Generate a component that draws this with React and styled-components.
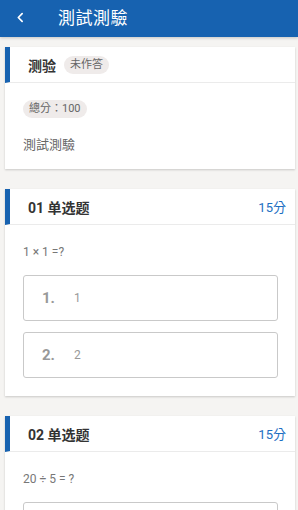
import React from "react";
import styled, { createGlobalStyle } from "styled-components";

const GlobalStyle = createGlobalStyle`
  body {
    margin: 0;
    background: #f5f4f2;
    font-family: Roboto, "Noto Sans CJK TC", "Noto Sans CJK SC", sans-serif;
  }
`;

const questions = [
  { no: "01", type: "单选题", score: 15, stem: "1 × 1 =?", options: ["1", "2"] },
  { no: "02", type: "单选题", score: 15, stem: "20 ÷ 5 = ?", options: ["4", "5"] },
];

function App() {
  return (
    <Page>
      <GlobalStyle />
      <TopBar>
        <BackButton>
          <svg width="13" height="13" viewBox="0 0 24 24" fill="none" stroke="#fff" strokeWidth="3.2" strokeLinecap="round" strokeLinejoin="round">
            <path d="M15 5 8 12l7 7" />
          </svg>
        </BackButton>
        <TopTitle>測試測驗</TopTitle>
      </TopBar>

      <List>
        <Card>
          <CardHead>
            <HeadTitle>测验</HeadTitle>
            <Tag>未作答</Tag>
          </CardHead>
          <CardBody $bottom={16}>
            <Tag $wide>總分：100</Tag>
            <Desc>測試測驗</Desc>
          </CardBody>
        </Card>

        {questions.map((q) => (
          <Card key={q.no}>
            <CardHead>
              <HeadTitle>{q.no} {q.type}</HeadTitle>
              <Score>{q.score}分</Score>
            </CardHead>
            <CardBody $bottom={18}>
              <Stem>{q.stem}</Stem>
              <Options>
                {q.options.map((opt, i) => (
                  <Option key={i}>
                    <OptNum>{i + 1}.</OptNum>
                    <OptText>{opt}</OptText>
                  </Option>
                ))}
              </Options>
            </CardBody>
          </Card>
        ))}
      </List>
    </Page>
  );
}
export default App;

const Page = styled.div`
  width: 298px;
  min-height: 510px;
  background: #f5f4f2;
`;
const TopBar = styled.div`
  height: 37px;
  background: #1762b0;
  display: flex;
  align-items: center;
  box-shadow: 0 1px 3px rgba(0, 0, 0, 0.2);
`;
const BackButton = styled.div`
  width: 40px;
  display: flex;
  justify-content: center;
  margin-top: -3px;
`;
const TopTitle = styled.div`
  margin-left: 18px;
  color: #fff;
  font-size: 17px;
  margin-top: -4px;
  letter-spacing: 0.5px;
`;
const List = styled.div`
  display: flex;
  flex-direction: column;
  gap: 20px;
  padding: 10px 3px 20px 5px;
`;
const Card = styled.div`
  background: #fff;
  box-shadow: 0 1px 2px rgba(0, 0, 0, 0.18);
`;
const CardHead = styled.div`
  height: 35px;
  display: flex;
  align-items: center;
  gap: 8px;
  padding: 0 9px 0 18px;
  border-left: 5px solid #1762b0;
  border-bottom: 1px solid #ebebeb;
`;
const HeadTitle = styled.div`
  font-size: 14px;
  font-weight: bold;
  color: #333;
`;
const Tag = styled.span`
  display: inline-block;
  align-self: ${(p) => (p.$wide ? "flex-start" : "auto")};
  background: #efebea;
  color: #666;
  font-size: 11px;
  line-height: 18px;
  padding: 0 6px;
  border-radius: 9px;
`;
const Score = styled.div`
  margin-left: auto;
  color: #1d6fc2;
  font-size: 13px;
`;
const CardBody = styled.div`
  display: flex;
  flex-direction: column;
  padding: 17px 17px ${(p) => p.$bottom ?? 17}px 18px;
`;
const Desc = styled.div`
  margin-top: 16px;
  color: #666;
  font-size: 13px;
`;
const Stem = styled.div`
  color: #777;
  font-size: 12px;
  margin-top: 3px;
`;
const Options = styled.div`
  display: flex;
  flex-direction: column;
  gap: 11px;
  margin-top: 16px;
`;
const Option = styled.div`
  height: 44px;
  display: flex;
  align-items: center;
  border: 1px solid #c9c9c9;
  border-radius: 3px;
  padding-left: 18px;
`;
const OptNum = styled.span`
  width: 32px;
  font-size: 15px;
  font-weight: bold;
  color: #999;
`;
const OptText = styled.span`
  font-size: 12px;
  color: #999;
`;
